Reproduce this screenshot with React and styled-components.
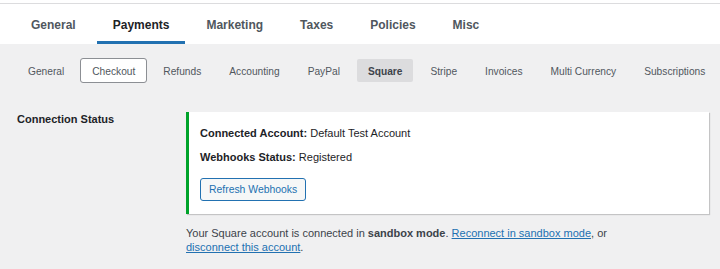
import styled, { createGlobalStyle } from 'styled-components'

const Global = createGlobalStyle`
    body {
        margin: 0;
        background: #f0f0f1;
        font-family: "Liberation Sans", Arial, sans-serif;
        color: #3c434a;
    }
`

const STopEdge = styled.div`
    height: 3px;
    background: #fff;
    border-bottom: 1px solid #dcdcde;
`

const SHeader = styled.nav`
    display: flex;
    height: 40px;
    padding-left: 15px;
    gap: 5px;
    background: #fff;
`

const STab = styled.a`
    display: flex;
    align-items: center;
    padding: 4px 16px 0;
    font-size: 12px;
    font-weight: 700;
    color: ${props => props.active ? '#1d2327' : '#50575e'};
    border-bottom: 3px solid ${props => props.active ? '#2271b1' : 'transparent'};
    text-decoration: none;
`

const SSubNav = styled.ul`
    display: flex;
    list-style: none;
    margin: 0;
    padding: 14px 16px 0;
    gap: 4px;
`

const SSubTab = styled.li`
    display: flex;
    flex-shrink: 0;
    align-items: center;
    height: 25px;
    box-sizing: border-box;
    padding: 1px 11px 0;
    font-size: 10.2px;
    white-space: nowrap;
    font-weight: ${props => props.current ? 700 : 400};
    color: ${props => props.current ? '#3c434a' : '#50575e'};
    border: 1px solid ${props => props.boxed ? '#8c8f94' : 'transparent'};
    border-radius: 3px;
    background: ${props => props.current ? '#dcdcde' : props.boxed ? '#fff' : 'transparent'};
    background-clip: padding-box;
`

const SSection = styled.div`
    display: flex;
    margin-top: 29px;
`

const SLabel = styled.div`
    width: 169px;
    padding-left: 17px;
    font-size: 11px;
    line-height: 14px;
    font-weight: 700;
    color: #1d2327;
`

const SField = styled.div`
    display: flex;
    flex-direction: column;
`

const SCard = styled.div`
    width: 523px;
    padding: 14px 11px 13px;
    box-sizing: border-box;
    background: #fff;
    border-left: 3px solid #00a32a;
    box-shadow: 1px 1px 1px rgba(0, 0, 0, 0.18);
`

const SLine = styled.p`
    margin: 0 0 10px;
    font-size: 11px;
    line-height: 14px;
    color: #1d2327;
`

const SButton = styled.button`
    margin-top: 4px;
    height: 23px;
    padding: 0 8px;
    font-family: inherit;
    font-size: 10.4px;
    color: #2271b1;
    background: #f6f7f7;
    border: 1px solid #2271b1;
    border-radius: 3px;
`

const SDesc = styled.p`
    width: 450px;
    margin: 12px 0 0;
    font-size: 11px;
    line-height: 14.3px;
    color: #3c434a;
`

const SLink = styled.a`
    color: #2271b1;
    text-decoration: underline;
`

const tabs = ['General', 'Payments', 'Marketing', 'Taxes', 'Policies', 'Misc']
const subTabs = ['General', 'Checkout', 'Refunds', 'Accounting', 'PayPal', 'Square', 'Stripe', 'Invoices', 'Multi Currency', 'Subscriptions']

const App = () => {
    return (
        <>
            <Global />
            <STopEdge />
            <SHeader>
                {tabs.map(t => (
                    <STab key={t} active={t === 'Payments'}>{t}</STab>
                ))}
            </SHeader>
            <SSubNav>
                {subTabs.map(t => (
                    <SSubTab key={t} boxed={t === 'Checkout'} current={t === 'Square'}>{t}</SSubTab>
                ))}
            </SSubNav>
            <SSection>
                <SLabel>Connection Status</SLabel>
                <SField>
                    <SCard>
                        <SLine><strong>Connected Account:</strong> Default Test Account</SLine>
                        <SLine><strong>Webhooks Status:</strong> Registered</SLine>
                        <SButton>Refresh Webhooks</SButton>
                    </SCard>
                    <SDesc>
                        Your Square account is connected in <strong>sandbox mode</strong>. <SLink href="#">Reconnect in sandbox mode</SLink>, or <SLink href="#">disconnect this account</SLink>.
                    </SDesc>
                </SField>
            </SSection>
        </>
    )
}

export default App
